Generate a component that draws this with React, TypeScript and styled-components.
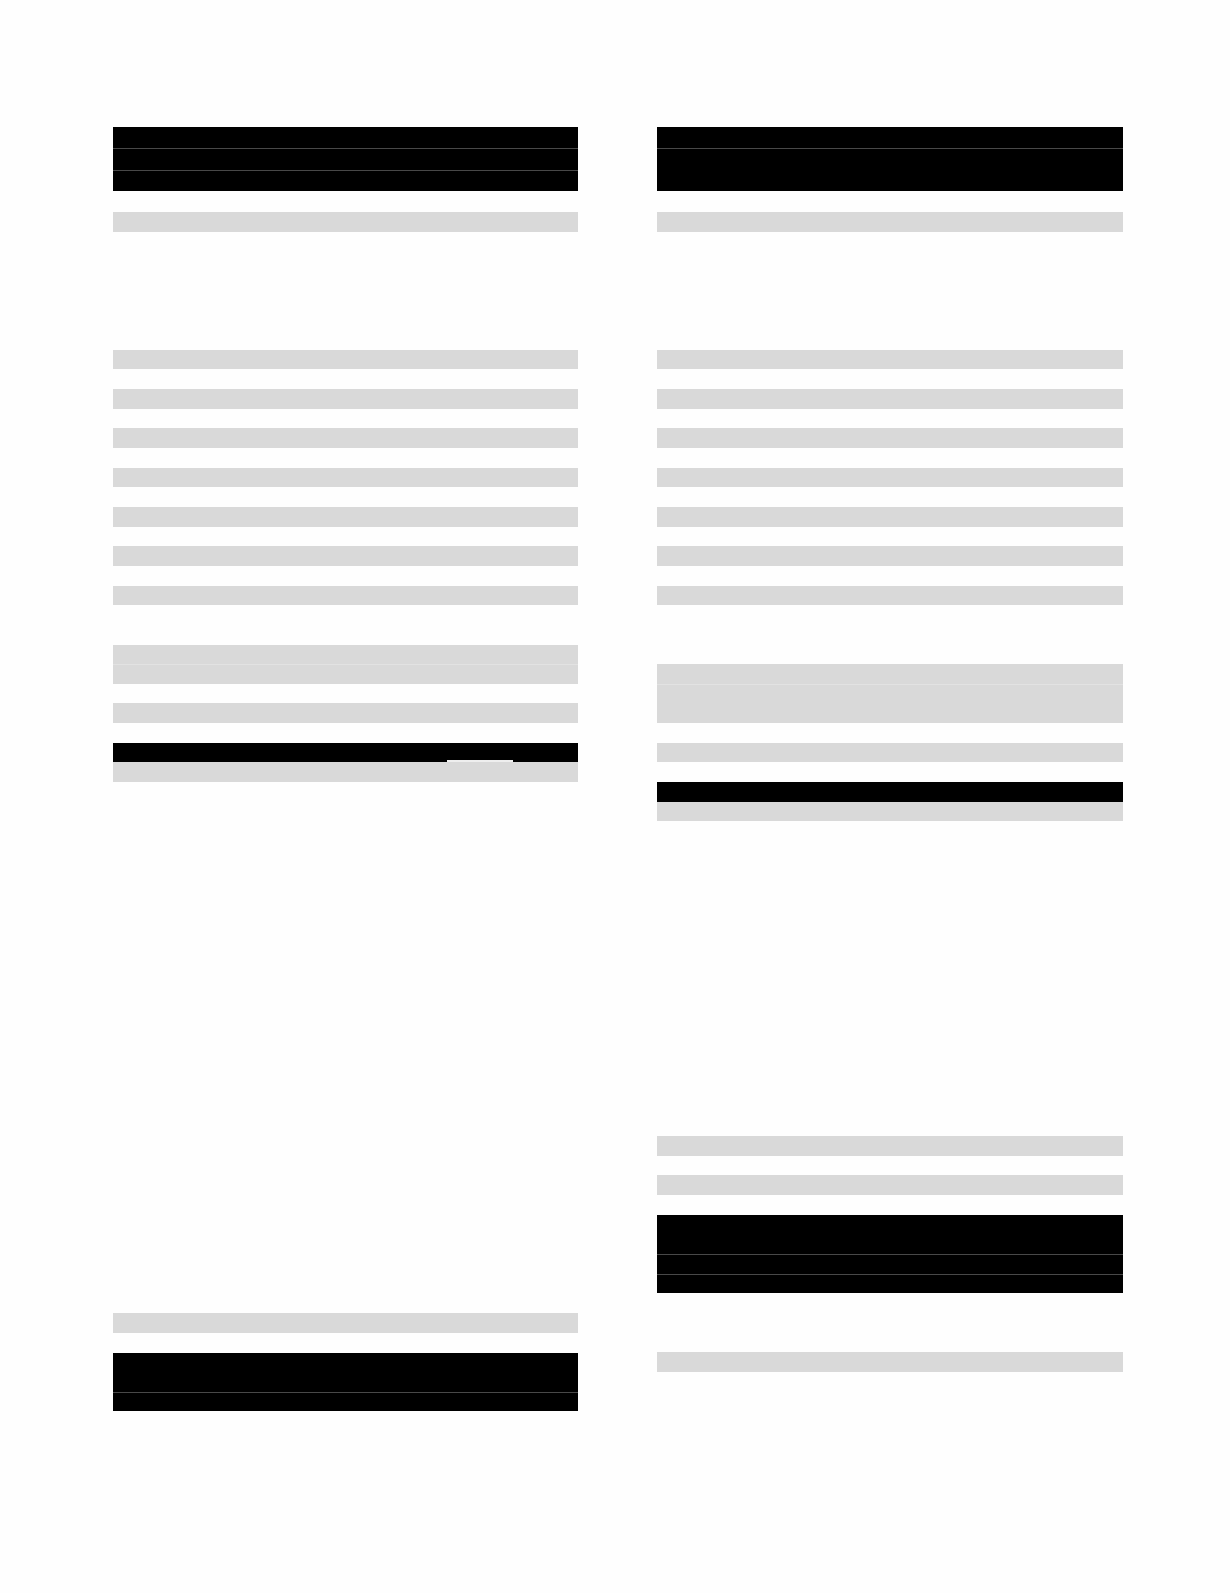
import React from "react";
import styled, { createGlobalStyle, css } from "styled-components";

const GlobalStyle = createGlobalStyle`
  html, body {
    margin: 0;
    padding: 0;
    background: #fefefe;
    font-family: "Liberation Sans", Arial, sans-serif;
  }
`;

/* one body text line */
const L = 19.67;
/* one heading line */
const H = 64 / 3;

type Tone = "dark" | "light";

type Item =
  | { kind: "space"; h: number }
  | { kind: "block"; tone: Tone; rows: number[]; notch?: boolean };

const Page = styled.main`
  width: 1230px;
  min-height: 1593px;
  box-sizing: border-box;
  padding: 127px 107px 0 113px;
`;

const Columns = styled.div`
  display: grid;
  grid-template-columns: 465px 466px;
  column-gap: 79px;
  align-items: start;
`;

const Column = styled.section`
  display: flex;
  flex-direction: column;
`;

const Spacer = styled.div<{ $h: number }>`
  height: ${(p) => p.$h}px;
  flex: none;
`;

const Block = styled.div<{ $tone: Tone; $notch?: boolean }>`
  position: relative;
  display: flex;
  flex-direction: column;
  flex: none;
  background: ${(p) => (p.$tone === "dark" ? "#000000" : "#d9d9d9")};
  ${(p) =>
    p.$notch &&
    css`
      &::after {
        content: "";
        position: absolute;
        left: 334px;
        width: 66px;
        bottom: 0;
        height: 2px;
        background: #eeeeee;
      }
    `}
`;

const Row = styled.div<{ $h: number; $tone: Tone; $first: boolean }>`
  height: ${(p) => p.$h}px;
  box-sizing: border-box;
  border-top: ${(p) =>
    p.$first ? "none" : `1px solid ${p.$tone === "dark" ? "#484848" : "#e2e2e2"}`};
`;

const g = (lines: number[] = [1]): Item => ({
  kind: "block",
  tone: "light",
  rows: lines.map((n) => n * L),
});
const k = (lines: number[] = [1], notch = false): Item => ({
  kind: "block",
  tone: "dark",
  rows: lines.map((n) => n * L),
  notch,
});
const heading = (lines: number[]): Item => ({
  kind: "block",
  tone: "dark",
  rows: lines.map((n) => n * H),
});
const s = (lines: number): Item => ({ kind: "space", h: lines * L });
const px = (h: number): Item => ({ kind: "space", h });

const intro: Item[] = [px(21), g(), s(6)];

const listBars: Item[] = [
  g(), s(1), g(), s(1), g(), s(1), g(), s(1), g(), s(1), g(), s(1), g(),
];

const leftColumn: Item[] = [
  heading([1, 1, 1]),
  ...intro,
  ...listBars,
  s(2),
  g([1, 1]),
  s(1),
  g(),
  s(1),
  k([1], true),
  g(),
  s(27),
  g(),
  s(1),
  k([2, 1]),
];

const rightColumn: Item[] = [
  heading([1, 2]),
  ...intro,
  ...listBars,
  s(3),
  g([1, 2]),
  s(1),
  g(),
  s(1),
  k(),
  g(),
  s(16),
  g(),
  s(1),
  g(),
  s(1),
  k([2, 1, 1]),
  s(3),
  g(),
];

function renderColumn(items: Item[]) {
  return items.map((it, i) =>
    it.kind === "space" ? (
      <Spacer key={i} $h={it.h} />
    ) : (
      <Block key={i} $tone={it.tone} $notch={it.notch}>
        {it.rows.map((h, j) => (
          <Row key={j} $h={h} $tone={it.tone} $first={j === 0} />
        ))}
      </Block>
    )
  );
}

export default function App() {
  return (
    <>
      <GlobalStyle />
      <Page>
        <Columns>
          <Column>{renderColumn(leftColumn)}</Column>
          <Column>{renderColumn(rightColumn)}</Column>
        </Columns>
      </Page>
    </>
  );
}
